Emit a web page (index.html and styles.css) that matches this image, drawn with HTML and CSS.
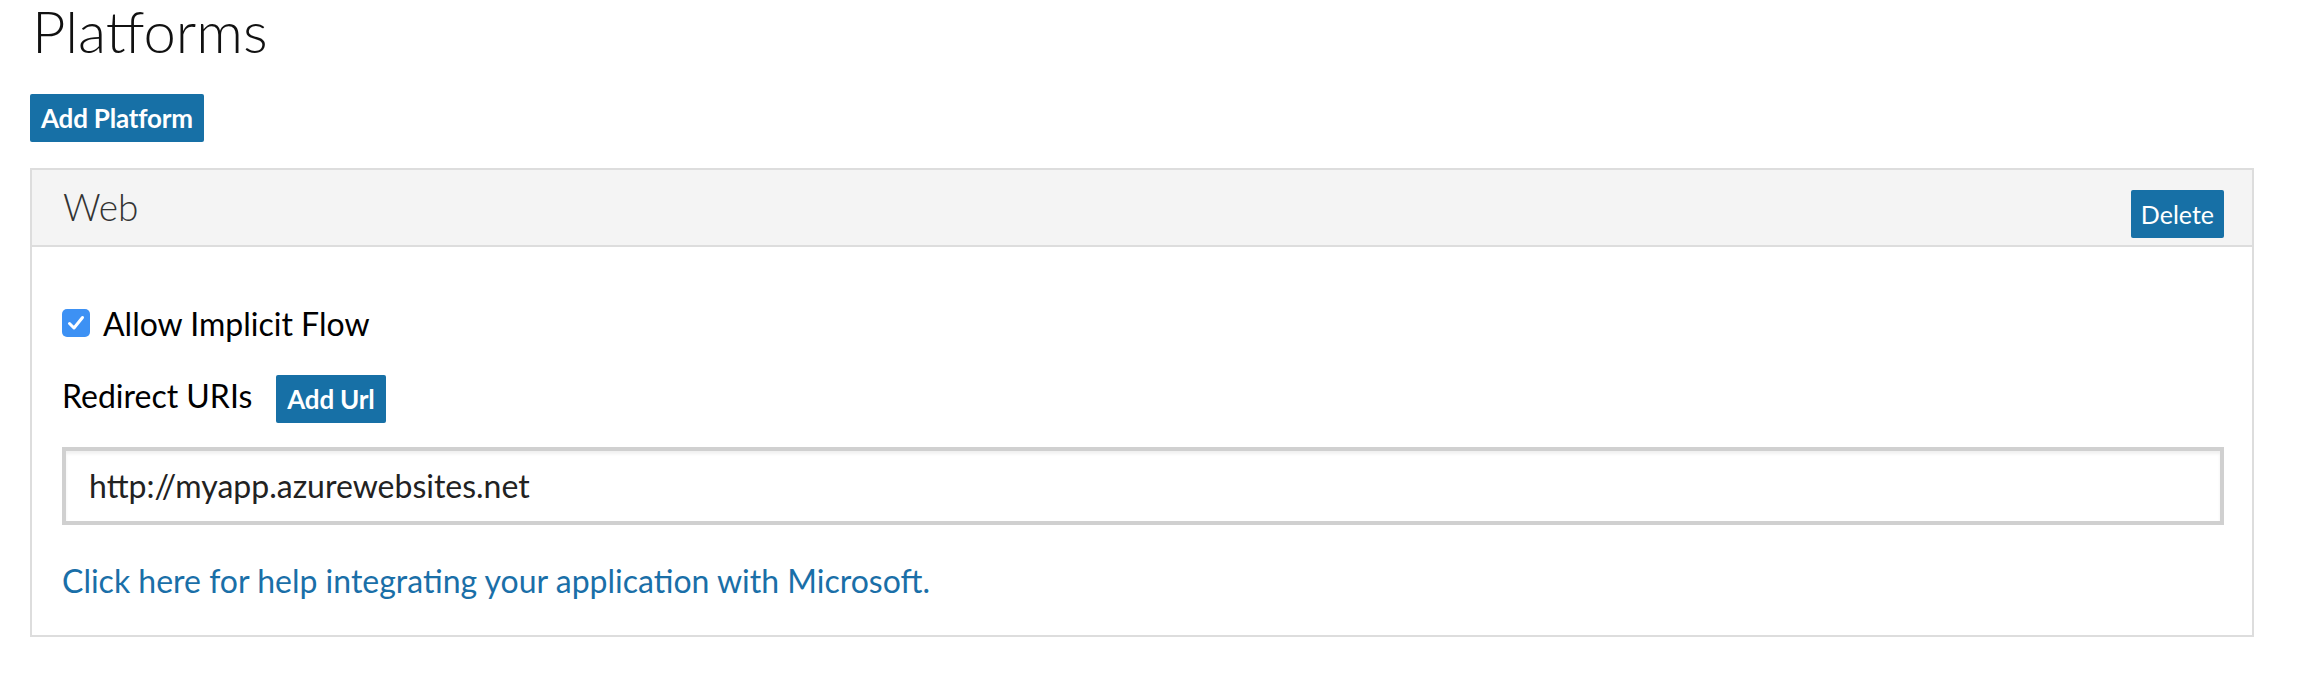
FILE: index.html
```html
<!DOCTYPE html>
<html>
<head>
<meta charset="utf-8">
<link rel="stylesheet" href="styles.css">
</head>
<body>
<div class="page">
  <h1 class="title">Platforms</h1>
  <div class="toolbar"><button class="btn btn-strong">Add Platform</button></div>
  <section class="panel">
    <header class="panel-head">
      <span class="panel-title">Web</span>
      <button class="btn btn-light">Delete</button>
    </header>
    <div class="panel-body">
      <label class="check-row">
        <span class="checkbox"><svg viewBox="0 0 28 28" width="28" height="28"><path d="M7.5 14.5 L12 19 L20.5 8.5" fill="none" stroke="#fff" stroke-width="3" stroke-linecap="round" stroke-linejoin="round"/></svg></span>
        <span class="check-label">Allow Implicit Flow</span>
      </label>
      <div class="uri-row">
        <span class="uri-label">Redirect URIs</span>
        <button class="btn btn-strong">Add Url</button>
      </div>
      <div class="uri-input">http://myapp.azurewebsites.net</div>
      <a class="help-link" href="#">Click here for help integrating your application with Microsoft.</a>
    </div>
  </section>
</div>
</body>
</html>
```

FILE: styles.css
```css
html, body {
  margin: 0;
  padding: 0;
  background: #fff;
}
body {
  font-family: Lato, "Open Sans", sans-serif;
  color: #000;
}
.page {
  padding: 0 48px 0 30px;
}
.title {
  margin: 0;
  font-weight: 300;
  font-size: 58px;
  line-height: 62px;
  color: #111;
  padding-left: 2px;
}
.toolbar {
  margin-top: 32px;
  display: flex;
}
.btn {
  border: none;
  border-radius: 2px;
  background: #1770a6;
  color: #fff;
  font-family: Lato, "Open Sans", sans-serif;
  font-size: 26px;
  height: 48px;
  padding: 0 11px;
  line-height: 48px;
}
.btn-strong {
  font-weight: 700;
  letter-spacing: -0.2px;
}
.btn-light {
  font-weight: 400;
  font-size: 25px;
  padding: 0 10px;
}
.panel {
  margin-top: 26px;
  border: 2px solid #ddd;
}
.panel-head {
  display: flex;
  align-items: center;
  justify-content: space-between;
  background: #f4f4f4;
  border-bottom: 2px solid #ddd;
  height: 77px;
  padding: 12px 28px 0 31px;
  box-sizing: border-box;
}
.panel-title {
  font-size: 37px;
  font-weight: 300;
  color: #333;
  position: relative;
  top: -7px;
}
.panel-body {
  padding: 61px 28px 34px 30px;
  display: flex;
  flex-direction: column;
}
.check-row {
  display: flex;
  align-items: center;
  gap: 13px;
  height: 30px;
}
.checkbox {
  width: 28px;
  height: 28px;
  border-radius: 5px;
  background: #3d91f4;
  display: flex;
}
.check-label {
  font-size: 32px;
}
.uri-row {
  margin-top: 37px;
  display: flex;
  align-items: center;
  gap: 24px;
}
.uri-label {
  font-size: 32px;
  position: relative;
  top: -4px;
}
.uri-input {
  margin-top: 24px;
  height: 78px;
  box-sizing: border-box;
  border: 4px solid #d0d0d0;
  box-shadow: inset 0 3px 3px rgba(0,0,0,0.06);
  padding: 0 23px;
  font-size: 32px;
  line-height: 70px;
  color: #222;
}
.help-link {
  margin-top: 36px;
  font-size: 32px;
  color: #1a6fa8;
  text-decoration: none;
  line-height: 40px;
}
```
